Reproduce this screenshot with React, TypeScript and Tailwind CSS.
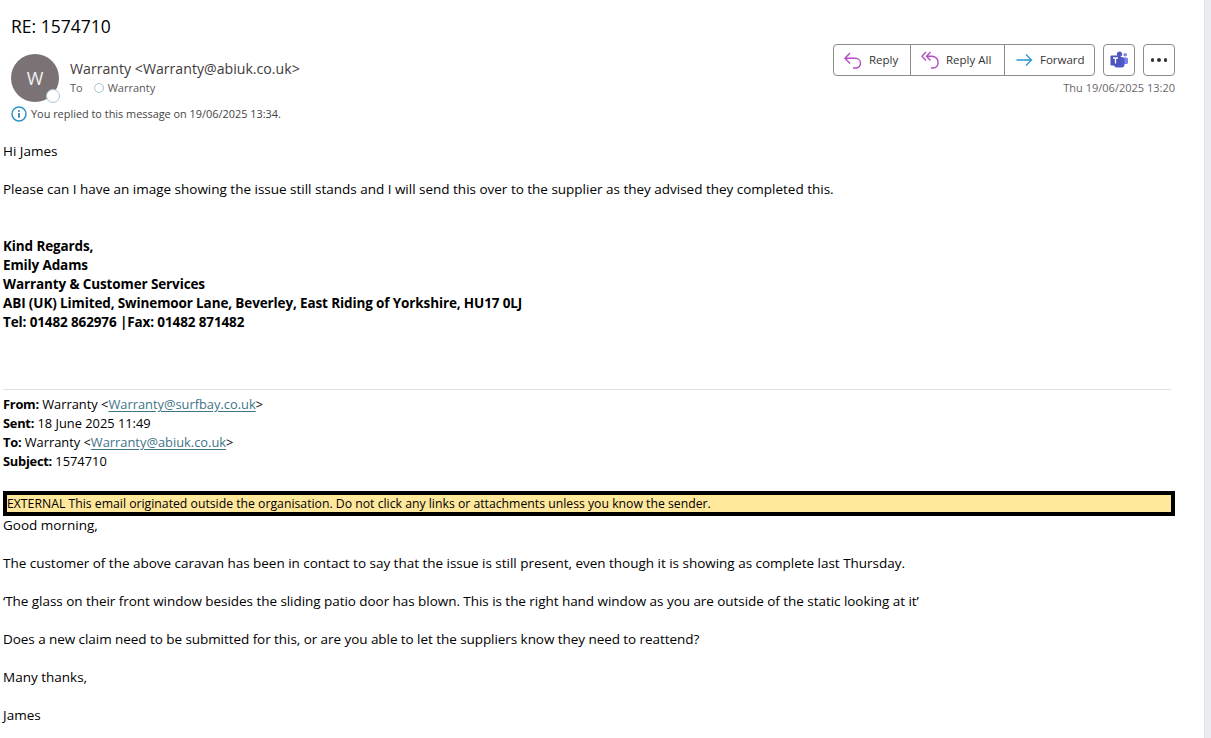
const ReplyIcon = () => (
  <svg width="18" height="18" viewBox="0 0 18 18" fill="none" stroke="#b04fc0" strokeWidth="1.4">
    <path d="M6 2 1 7.3 6 12.5M1 7.3H11.5a5 5 0 0 1 5 4.7 4.6 4.6 0 0 1-4.6 5H9" />
  </svg>
);

const ReplyAllIcon = () => (
  <svg width="18" height="18" viewBox="0 0 18 18" fill="none" stroke="#b04fc0" strokeWidth="1.4">
    <path d="M5 1 1 5.3 5 9.5M9.5 1 5.5 5.3 9.5 9.5M5.5 5.3h5.5a6 6 0 0 1 6 6v.7a4.8 4.8 0 0 1-4.8 5H10" />
  </svg>
);

const ForwardIcon = () => (
  <svg width="18" height="18" viewBox="0 0 18 18" fill="none" stroke="#2b93d1" strokeWidth="1.3">
    <path d="M11 3.5 16.5 9 11 14.5M16.5 9H1.5" />
  </svg>
);

const TeamsIcon = () => (
  <svg width="18" height="18" viewBox="0 0 18 18">
    <circle cx="15.2" cy="3.8" r="1.8" fill="#7b83eb" />
    <rect x="12.5" y="6.5" width="5.5" height="6.5" rx="1.5" fill="#7b83eb" />
    <circle cx="9.5" cy="3" r="2.6" fill="#5059c9" />
    <rect x="4" y="6" width="10.5" height="10.5" rx="3" fill="#5059c9" />
    <rect x="0.5" y="4.5" width="10" height="10" rx="1" fill="#4b53bc" />
    <path d="M3 7h5M5.5 7v5.5" stroke="#fff" strokeWidth="1.3" fill="none" />
  </svg>
);

const InfoIcon = () => (
  <svg width="16" height="16" viewBox="0 0 16 16" fill="none">
    <circle cx="8" cy="8" r="7" stroke="#2b93c9" strokeWidth="1.5" />
    <rect x="7.2" y="7" width="1.6" height="4.6" fill="#1f6f9c" />
    <rect x="7.2" y="4.2" width="1.6" height="1.6" fill="#1f6f9c" />
  </svg>
);

function Mail({ children }: { children: string }) {
  return <span className="text-[#3f7488] underline underline-offset-2">{children}</span>;
}

export default function App() {
  return (
    <div className="flex h-[738px] overflow-hidden bg-white font-['Open_Sans','Noto_Sans',sans-serif] text-black">
      <div className="w-[1204px] shrink-0">
        <h1 className="pl-[11px] pt-[14px] text-[17.5px] leading-6">RE: 1574710</h1>

        <div className="mt-[6px] flex justify-between pl-[11px] pr-[29px]">
          <div className="pt-[10px]">
            <div className="flex">
              <div className="relative flex h-12 w-12 items-center justify-center rounded-full bg-[#7a7274] text-[18px] text-white/90">
                W
                <span className="absolute bottom-[-1px] right-[-1px] h-3.5 w-3.5 rounded-full border-[1.5px] border-[#a8c6d6] bg-white" />
              </div>
              <div className="ml-[11px] pt-[5px]">
                <div className="text-[14.15px] leading-5 text-[#3f3a3c]">Warranty &lt;Warranty@abiuk.co.uk&gt;</div>
                <div className="mt-[1px] flex items-center text-[11px] leading-4 text-[#5c5658]">
                  <span>To</span>
                  <span className="ml-[11px] h-[10px] w-[10px] rounded-full border border-[#a8c6d6]" />
                  <span className="ml-[4px]">Warranty</span>
                </div>
              </div>
            </div>
            <div className="mt-[4px] flex items-center gap-[4px] text-[10.9px] leading-4 text-[#444]">
              <InfoIcon />
              <span>You replied to this message on 19/06/2025 13:34.</span>
            </div>
          </div>

          <div className="flex flex-col items-end">
            <div className="flex gap-2">
              <div className="flex h-8 rounded border border-[#8d8d8d] text-[11.5px] text-[#333]">
                <button className="flex w-[76px] items-center gap-[7px] pl-[10px]">
                  <ReplyIcon />
                  Reply
                </button>
                <button className="flex w-[94px] items-center gap-[7px] border-l border-[#8d8d8d] pl-[10px]">
                  <ReplyAllIcon />
                  Reply All
                </button>
                <button className="flex w-[90px] items-center gap-[7px] border-l border-[#8d8d8d] pl-[10px]">
                  <ForwardIcon />
                  Forward
                </button>
              </div>
              <button className="flex h-8 w-8 items-center justify-center rounded border border-[#8d8d8d]">
                <TeamsIcon />
              </button>
              <button className="flex h-8 w-8 items-center justify-center gap-[3px] rounded border border-[#8d8d8d]">
                <span className="h-[3.5px] w-[3.5px] rounded-full bg-[#333]" />
                <span className="h-[3.5px] w-[3.5px] rounded-full bg-[#333]" />
                <span className="h-[3.5px] w-[3.5px] rounded-full bg-[#333]" />
              </button>
            </div>
            <div className="mt-[4px] text-[11px] leading-4 text-[#6b6567]">Thu 19/06/2025 13:20</div>
          </div>
        </div>

        <div className="mt-[20px] pl-[3px] text-[13.5px] leading-[19px]">
          <p>Hi James</p>
          <p className="mt-[19px] tracking-[-0.01px]">
            Please can I have an image showing the issue still stands and I will send this over to the supplier as they advised they completed this.
          </p>
          <div className="mt-[38px] font-bold tracking-[-0.125px]">
            <p>Kind Regards,</p>
            <p>Emily Adams</p>
            <p>Warranty &amp; Customer Services</p>
            <p>ABI (UK) Limited, Swinemoor Lane, Beverley, East Riding of Yorkshire, HU17 0LJ</p>
            <p>Tel: 01482 862976 |Fax: 01482 871482</p>
          </div>
        </div>

        <hr className="ml-[3px] mt-[57px] w-[1168px] border-[#e1e1e1]" />

        <div className="mt-[5px] pl-[3px] text-[12.85px] leading-[19px]">
          <p><b className="tracking-[-0.25px]">From:</b> Warranty &lt;<Mail>Warranty@surfbay.co.uk</Mail>&gt;</p>
          <p><b className="tracking-[-0.25px]">Sent:</b> 18 June 2025 11:49</p>
          <p><b className="tracking-[-0.25px]">To:</b> Warranty &lt;<Mail>Warranty@abiuk.co.uk</Mail>&gt;</p>
          <p><b className="tracking-[-0.25px]">Subject:</b> 1574710</p>
        </div>

        <div className="ml-[3px] mt-[20px] h-[25px] w-[1172px] border-4 border-black bg-[#ffe79b] text-[12.24px] leading-[18px]">
          EXTERNAL This email originated outside the organisation. Do not click any links or attachments unless you know the sender.
        </div>

        <div className="pl-[3px] text-[13.5px] leading-[19px]">
          <p>Good morning,</p>
          <p className="mt-[19px] tracking-[-0.02px]">The customer of the above caravan has been in contact to say that the issue is still present, even though it is showing as complete last Thursday.</p>
          <p className="mt-[19px] tracking-[-0.05px]">‘The glass on their front window besides the sliding patio door has blown. This is the right hand window as you are outside of the static looking at it’</p>
          <p className="mt-[19px] tracking-[-0.06px]">Does a new claim need to be submitted for this, or are you able to let the suppliers know they need to reattend?</p>
          <p className="mt-[19px]">Many thanks,</p>
          <p className="mt-[19px]">James</p>
        </div>
      </div>
      <div className="ml-auto w-[7px] border-l border-[#dfe3e8] bg-[#e9edf2]" />
    </div>
  );
}
